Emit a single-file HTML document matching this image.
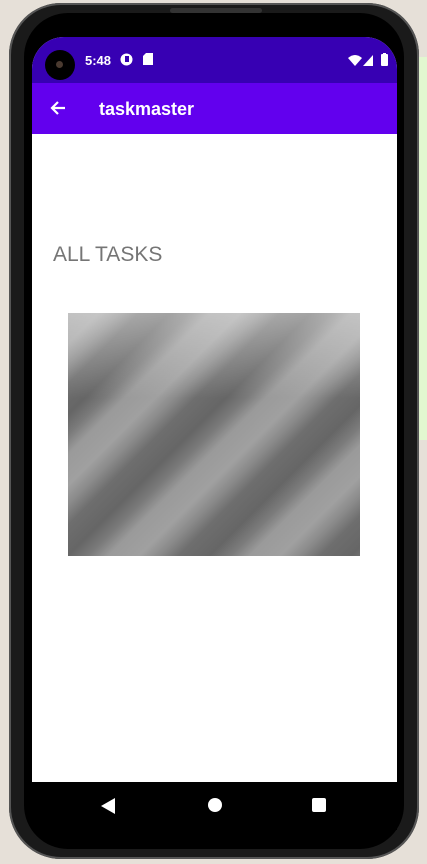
<!DOCTYPE html>
<html><head><meta charset="utf-8"><style>
html,body{margin:0;padding:0;width:427px;height:864px;overflow:hidden;background:#e6e0d8;font-family:"Liberation Sans",Roboto,sans-serif}
.green{position:absolute;left:414px;top:57px;width:13px;height:383px;background:#e2f7d0}
.phone{position:absolute;left:9px;top:3px;width:410px;height:856px;border-radius:52px;background:#1a1a1a;box-shadow:0 0 0 2px #555 inset}
.inner{position:absolute;left:15px;top:10px;width:380px;height:836px;border-radius:44px;background:#000}
.screen{position:absolute;left:32px;top:37px;width:365px;height:793px;border-radius:32px 32px 0 0;overflow:hidden;background:#fff}
.status{height:46px;background:#3700b3;color:#fff;font-size:13px;font-weight:bold;position:relative}
.cam{position:absolute;left:13px;top:13px;width:30px;height:30px;border-radius:50%;background:#000}
.cam:after{content:"";position:absolute;left:11px;top:11px;width:7px;height:7px;border-radius:50%;background:#4a3a30}
.time{position:absolute;left:53px;top:16px}
.appbar{height:51px;background:#6200ee;color:#fff;position:relative}
.title{position:absolute;left:67px;top:16px;font-size:18px;font-weight:bold}
.content{position:absolute;top:97px;left:0;right:0;height:648px;background:#fff}
.h{position:absolute;left:21px;top:109px;font-size:21px;color:#757575}
.img{position:absolute;left:36px;top:179px;width:292px;height:243px;
background:linear-gradient(180deg,rgba(255,255,255,.4),rgba(255,255,255,0) 35%),
repeating-linear-gradient(135deg,#9a9a9a 0px,#a0a0a0 22px,#8a8a8a 36px,#6e6e6e 50px,#666 72px,#7a7a7a 86px,#9a9a9a 100px)}
.nav{position:absolute;left:32px;top:782px;width:365px;height:48px;background:#000}
</style></head><body>
<div class="green"></div>
<div class="phone"><div class="inner"></div></div>
<div style="position:absolute;left:170px;top:8px;width:92px;height:5px;background:#333;border-radius:3px"></div>
<div class="screen">
 <div class="status"><div class="cam"></div><span class="time">5:48</span>
  <svg style="position:absolute;left:88px;top:16px" width="13" height="13"><circle cx="6.5" cy="6.5" r="6" fill="#fff"/><rect x="5" y="3" width="4" height="6" fill="#3700b3"/></svg>
  <svg style="position:absolute;left:111px;top:16px" width="10" height="12"><path d="M3 0H10V12H0V3Z" fill="#fff"/></svg>
  <svg style="position:absolute;left:316px;top:18px" width="14" height="11"><path d="M0 3Q7 -3 14 3L7 11Z" fill="#fff"/></svg>
  <svg style="position:absolute;left:331px;top:18px" width="10" height="11"><path d="M10 0V11H0Z" fill="#fff"/></svg>
  <svg style="position:absolute;left:349px;top:16px" width="7" height="13"><rect x="0" y="1" width="7" height="12" rx="1" fill="#fff"/><rect x="2" y="0" width="3" height="2" fill="#fff"/></svg>
 </div>
 <div class="appbar">
  <svg style="position:absolute;left:17px;top:16px" width="18" height="18" viewBox="0 0 18 18"><path d="M16 9H3M9 3L3 9L9 15" stroke="#fff" stroke-width="2.2" fill="none"/></svg>
  <span class="title">taskmaster</span>
 </div>
 <div class="content">
  <div class="h">ALL TASKS</div>
  <div class="img"></div>
 </div>
</div>
<div class="nav">
 <svg style="position:absolute;left:69px;top:16px" width="14" height="16"><path d="M14 0V16L0 8Z" fill="#fff"/></svg>
 <div style="position:absolute;left:176px;top:16px;width:14px;height:14px;border-radius:50%;background:#fff"></div>
 <div style="position:absolute;left:280px;top:16px;width:14px;height:14px;border-radius:2px;background:#fff"></div>
</div>
</body></html>
